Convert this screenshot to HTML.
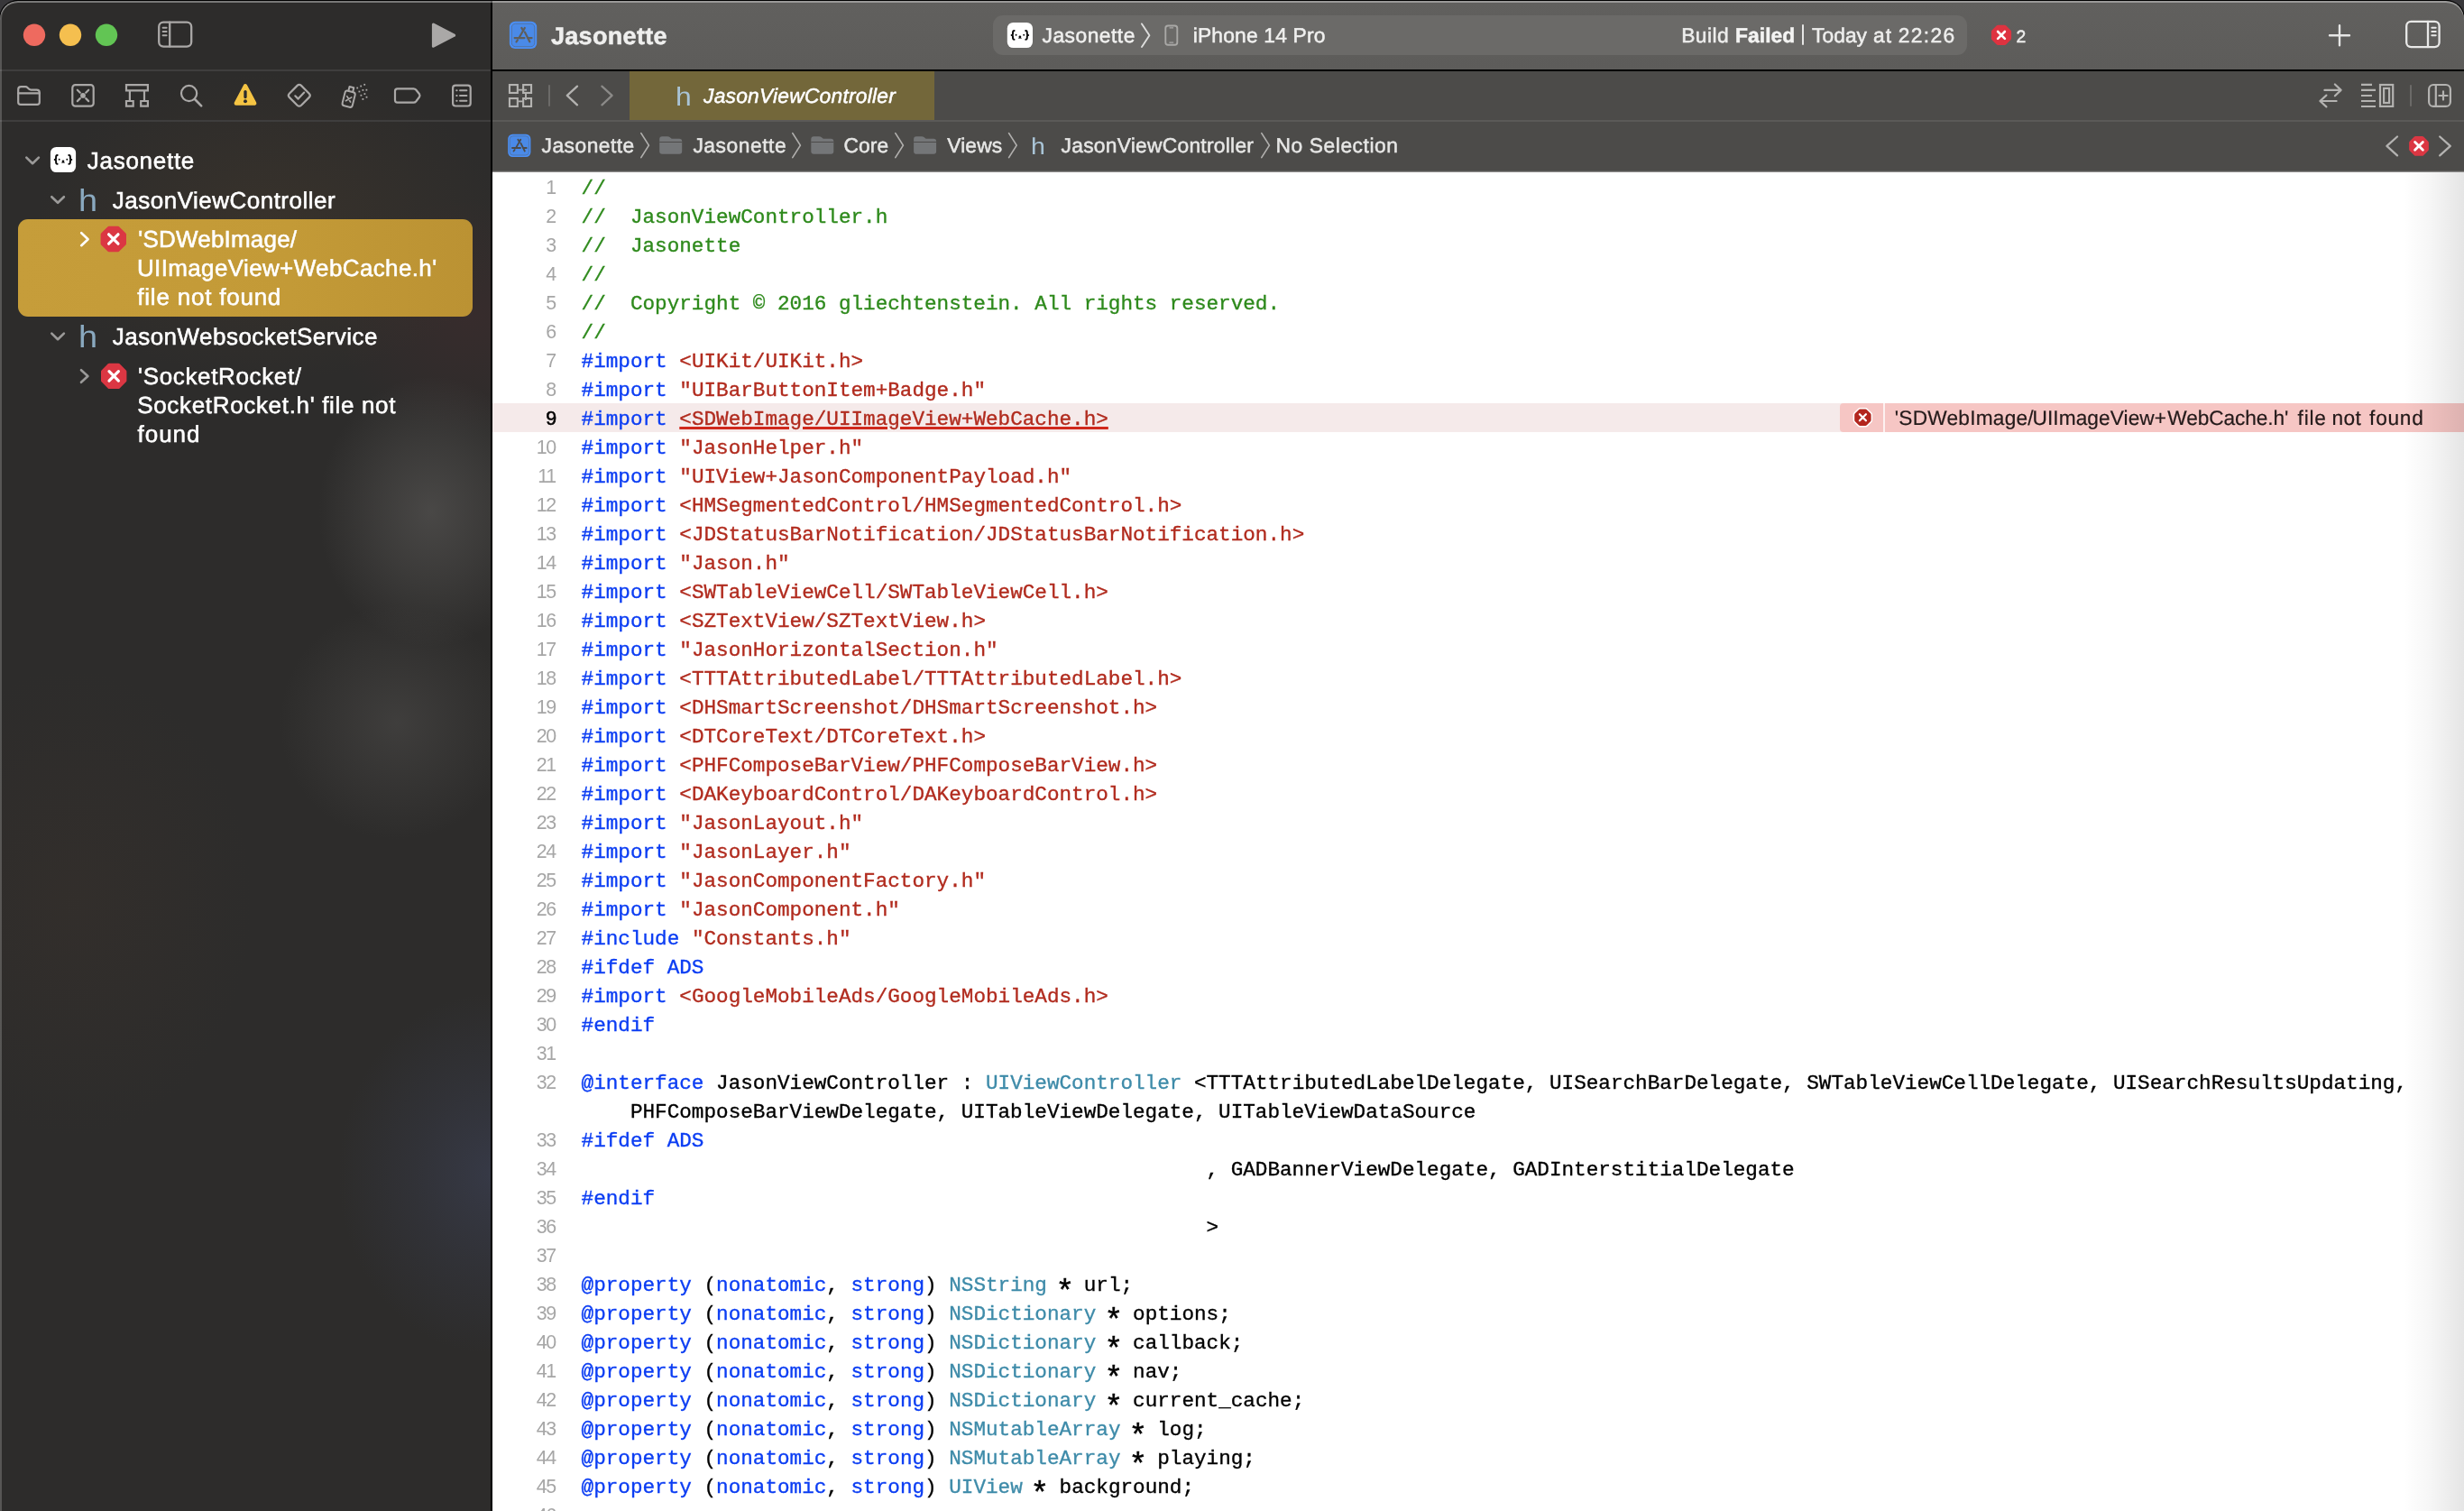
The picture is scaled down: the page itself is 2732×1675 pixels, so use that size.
<!DOCTYPE html><html lang="en"><head><meta charset="utf-8"><title>Jasonette — JasonViewController.h</title><style>
html,body{margin:0;padding:0}
body{width:2732px;height:1675px;position:relative;overflow:hidden;background:#38373a;font-family:'Liberation Sans',sans-serif}
.abs,.t,.win,.win div,.win pre{position:absolute}
.t{white-space:pre;line-height:1;margin:0;text-rendering:geometricPrecision}
.win{will-change:transform;left:0;top:1px;width:2732px;height:1674px;border-radius:20px 20px 0 0;overflow:hidden;background:#2d2c2c;box-shadow:0 0 0 1.2px #000}
#sidebar{left:0;top:0;width:544px;height:1690px;background:
 radial-gradient(ellipse 125px 150px at 478px 566px, rgba(112,110,108,.42), rgba(112,110,108,.22) 50%, rgba(112,110,108,0) 100%),
 radial-gradient(ellipse 130px 130px at 440px 800px, rgba(105,103,101,.30), rgba(105,103,101,.15) 50%, rgba(105,103,101,0) 100%),
 radial-gradient(ellipse 170px 200px at 545px 1300px, rgba(62,68,92,.55), rgba(62,68,92,.25) 50%, rgba(62,68,92,0) 100%),
 radial-gradient(ellipse 260px 170px at 300px 250px, rgba(78,62,44,.34), rgba(78,62,44,.16) 55%, rgba(78,62,44,0) 100%),
 radial-gradient(ellipse 150px 130px at 520px 350px, rgba(70,44,46,.40), rgba(70,44,46,.18) 55%, rgba(70,44,46,0) 100%),
 radial-gradient(ellipse 200px 260px at 80px 1000px, rgba(64,52,44,.28), rgba(64,52,44,0) 100%),
 #2d2c2b}
#vdiv{left:544px;top:0;width:2px;height:1690px;background:#000}
#titlebar{left:546px;top:0;width:2186px;height:76px;background:linear-gradient(#61605e,#5d5c5a)}
#tline{left:546px;top:76px;width:2186px;height:2px;background:#000}
#sline1{left:0;top:76px;width:544px;height:2px;background:#3f3e3e}
#sline2{left:0;top:132px;width:544px;height:2px;background:#3f3e3e}
#tabbar{left:546px;top:78px;width:2186px;height:54px;background:#4c4b49}
#tab{left:698px;top:78px;width:338px;height:54px;background:#73673a}
#tabline{left:546px;top:132px;width:2186px;height:2px;background:#5b5a58}
#crumbs{left:546px;top:134px;width:2186px;height:56px;background:linear-gradient(#4c4b49 54px,#5b5a58 54px,#5b5a58 55px,#8c8b8a 55px)}
#editor{left:546px;top:190px;width:2186px;height:1500px;background:#fff}
#edshadow{left:2119px;top:0;width:67px;height:1500px;background:linear-gradient(90deg,rgba(0,0,0,0),rgba(0,0,0,.03) 40%,rgba(0,0,0,.10))}
#schip{left:1101px;top:16px;width:1080px;height:44px;border-radius:11px;background:#6b6a68}
#hl{left:0;top:256px;width:2186px;height:32px;background:#f5eaea}
#errb{left:1494px;top:256px;width:692px;height:32px;background:#f6c6c4;border-radius:4px 0 0 4px}
#errsep{left:1541.8px;top:256px;width:2.2px;height:32px;background:#fdf1f0}
#sel{left:20px;top:242px;width:504px;height:108px;border-radius:11px;background:linear-gradient(90deg,#c69d3a,#c39a37 60%,#bb9233)}
.ln{right:2116.4px;letter-spacing:-1.45px;font-size:21.4px;color:#a6a6a6;white-space:pre;line-height:32px;height:32px;text-align:right;width:60px;left:auto}
.cl{left:98.6px;font-family:'Liberation Mono',monospace;font-size:22.651px;line-height:32px;height:32px;white-space:pre;color:#000;margin:0;-webkit-text-stroke:.35px currentColor}
.c{color:#2e8a1c}.k{color:#0b3df3}.s{color:#b12b1e}.y{color:#3e8ba9}
.a{display:inline-block;transform:translate(-1px,8.5px) scale(1.52)}
.u{text-decoration:underline;text-decoration-color:#d0281c;text-decoration-thickness:2.8px;text-underline-offset:1.6px}
#wborder{left:0;top:0;width:2732px;height:1690px;border-radius:20px 20px 0 0;box-shadow:inset 0 2px 0 rgba(255,255,255,.36),inset 2px 0 0 rgba(255,255,255,.2)}
svg{position:absolute;left:0;top:0;overflow:visible}
</style></head><body>
<div class="win">
<div id="sidebar"></div><div id="sline1"></div><div id="sline2"></div>
<div id="sel"></div>
<div id="vdiv"></div><div id="titlebar"></div><div id="tline"></div><div id="tabbar"></div><div id="tab"></div><div id="tabline"></div><div id="crumbs"></div>
<div id="schip"></div>
<div id="editor"><div id="hl"></div><div id="errb"></div><div id="errsep"></div>
<div class="ln" style="top:1px">1</div>
<pre class="cl" style="top:2px"><span class="c">//</span></pre>
<div class="ln" style="top:33px">2</div>
<pre class="cl" style="top:34px"><span class="c">//  JasonViewController.h</span></pre>
<div class="ln" style="top:65px">3</div>
<pre class="cl" style="top:66px"><span class="c">//  Jasonette</span></pre>
<div class="ln" style="top:97px">4</div>
<pre class="cl" style="top:98px"><span class="c">//</span></pre>
<div class="ln" style="top:129px">5</div>
<pre class="cl" style="top:130px"><span class="c">//  Copyright © 2016 gliechtenstein. All rights reserved.</span></pre>
<div class="ln" style="top:161px">6</div>
<pre class="cl" style="top:162px"><span class="c">//</span></pre>
<div class="ln" style="top:193px">7</div>
<pre class="cl" style="top:194px"><span class="k">#import </span><span class="s">&lt;UIKit/UIKit.h&gt;</span></pre>
<div class="ln" style="top:225px">8</div>
<pre class="cl" style="top:226px"><span class="k">#import </span><span class="s">"UIBarButtonItem+Badge.h"</span></pre>
<div class="ln" style="top:257px;color:#000;-webkit-text-stroke:.55px #000">9</div>
<pre class="cl" style="top:258px"><span class="k">#import </span><span class="s u">&lt;SDWebImage/UIImageView+WebCache.h&gt;</span></pre>
<div class="ln" style="top:289px">10</div>
<pre class="cl" style="top:290px"><span class="k">#import </span><span class="s">"JasonHelper.h"</span></pre>
<div class="ln" style="top:321px">11</div>
<pre class="cl" style="top:322px"><span class="k">#import </span><span class="s">"UIView+JasonComponentPayload.h"</span></pre>
<div class="ln" style="top:353px">12</div>
<pre class="cl" style="top:354px"><span class="k">#import </span><span class="s">&lt;HMSegmentedControl/HMSegmentedControl.h&gt;</span></pre>
<div class="ln" style="top:385px">13</div>
<pre class="cl" style="top:386px"><span class="k">#import </span><span class="s">&lt;JDStatusBarNotification/JDStatusBarNotification.h&gt;</span></pre>
<div class="ln" style="top:417px">14</div>
<pre class="cl" style="top:418px"><span class="k">#import </span><span class="s">"Jason.h"</span></pre>
<div class="ln" style="top:449px">15</div>
<pre class="cl" style="top:450px"><span class="k">#import </span><span class="s">&lt;SWTableViewCell/SWTableViewCell.h&gt;</span></pre>
<div class="ln" style="top:481px">16</div>
<pre class="cl" style="top:482px"><span class="k">#import </span><span class="s">&lt;SZTextView/SZTextView.h&gt;</span></pre>
<div class="ln" style="top:513px">17</div>
<pre class="cl" style="top:514px"><span class="k">#import </span><span class="s">"JasonHorizontalSection.h"</span></pre>
<div class="ln" style="top:545px">18</div>
<pre class="cl" style="top:546px"><span class="k">#import </span><span class="s">&lt;TTTAttributedLabel/TTTAttributedLabel.h&gt;</span></pre>
<div class="ln" style="top:577px">19</div>
<pre class="cl" style="top:578px"><span class="k">#import </span><span class="s">&lt;DHSmartScreenshot/DHSmartScreenshot.h&gt;</span></pre>
<div class="ln" style="top:609px">20</div>
<pre class="cl" style="top:610px"><span class="k">#import </span><span class="s">&lt;DTCoreText/DTCoreText.h&gt;</span></pre>
<div class="ln" style="top:641px">21</div>
<pre class="cl" style="top:642px"><span class="k">#import </span><span class="s">&lt;PHFComposeBarView/PHFComposeBarView.h&gt;</span></pre>
<div class="ln" style="top:673px">22</div>
<pre class="cl" style="top:674px"><span class="k">#import </span><span class="s">&lt;DAKeyboardControl/DAKeyboardControl.h&gt;</span></pre>
<div class="ln" style="top:705px">23</div>
<pre class="cl" style="top:706px"><span class="k">#import </span><span class="s">"JasonLayout.h"</span></pre>
<div class="ln" style="top:737px">24</div>
<pre class="cl" style="top:738px"><span class="k">#import </span><span class="s">"JasonLayer.h"</span></pre>
<div class="ln" style="top:769px">25</div>
<pre class="cl" style="top:770px"><span class="k">#import </span><span class="s">"JasonComponentFactory.h"</span></pre>
<div class="ln" style="top:801px">26</div>
<pre class="cl" style="top:802px"><span class="k">#import </span><span class="s">"JasonComponent.h"</span></pre>
<div class="ln" style="top:833px">27</div>
<pre class="cl" style="top:834px"><span class="k">#include </span><span class="s">"Constants.h"</span></pre>
<div class="ln" style="top:865px">28</div>
<pre class="cl" style="top:866px"><span class="k">#ifdef ADS</span></pre>
<div class="ln" style="top:897px">29</div>
<pre class="cl" style="top:898px"><span class="k">#import </span><span class="s">&lt;GoogleMobileAds/GoogleMobileAds.h&gt;</span></pre>
<div class="ln" style="top:929px">30</div>
<pre class="cl" style="top:930px"><span class="k">#endif</span></pre>
<div class="ln" style="top:961px">31</div>
<div class="ln" style="top:993px">32</div>
<pre class="cl" style="top:994px"><span class="k">@interface</span> JasonViewController : <span class="y">UIViewController</span> &lt;TTTAttributedLabelDelegate, UISearchBarDelegate, SWTableViewCellDelegate, UISearchResultsUpdating,</pre>
<pre class="cl" style="top:1026px">    PHFComposeBarViewDelegate, UITableViewDelegate, UITableViewDataSource</pre>
<div class="ln" style="top:1057px">33</div>
<pre class="cl" style="top:1058px"><span class="k">#ifdef ADS</span></pre>
<div class="ln" style="top:1089px">34</div>
<pre class="cl" style="top:1090px">                                                   , GADBannerViewDelegate, GADInterstitialDelegate</pre>
<div class="ln" style="top:1121px">35</div>
<pre class="cl" style="top:1122px"><span class="k">#endif</span></pre>
<div class="ln" style="top:1153px">36</div>
<pre class="cl" style="top:1154px">                                                   &gt;</pre>
<div class="ln" style="top:1185px">37</div>
<div class="ln" style="top:1217px">38</div>
<pre class="cl" style="top:1218px"><span class="k">@property</span> (<span class="k">nonatomic</span>, <span class="k">strong</span>) <span class="y">NSString</span> <span class="a">*</span> url;</pre>
<div class="ln" style="top:1249px">39</div>
<pre class="cl" style="top:1250px"><span class="k">@property</span> (<span class="k">nonatomic</span>, <span class="k">strong</span>) <span class="y">NSDictionary</span> <span class="a">*</span> options;</pre>
<div class="ln" style="top:1281px">40</div>
<pre class="cl" style="top:1282px"><span class="k">@property</span> (<span class="k">nonatomic</span>, <span class="k">strong</span>) <span class="y">NSDictionary</span> <span class="a">*</span> callback;</pre>
<div class="ln" style="top:1313px">41</div>
<pre class="cl" style="top:1314px"><span class="k">@property</span> (<span class="k">nonatomic</span>, <span class="k">strong</span>) <span class="y">NSDictionary</span> <span class="a">*</span> nav;</pre>
<div class="ln" style="top:1345px">42</div>
<pre class="cl" style="top:1346px"><span class="k">@property</span> (<span class="k">nonatomic</span>, <span class="k">strong</span>) <span class="y">NSDictionary</span> <span class="a">*</span> current_cache;</pre>
<div class="ln" style="top:1377px">43</div>
<pre class="cl" style="top:1378px"><span class="k">@property</span> (<span class="k">nonatomic</span>, <span class="k">strong</span>) <span class="y">NSMutableArray</span> <span class="a">*</span> log;</pre>
<div class="ln" style="top:1409px">44</div>
<pre class="cl" style="top:1410px"><span class="k">@property</span> (<span class="k">nonatomic</span>, <span class="k">strong</span>) <span class="y">NSMutableArray</span> <span class="a">*</span> playing;</pre>
<div class="ln" style="top:1441px">45</div>
<pre class="cl" style="top:1442px"><span class="k">@property</span> (<span class="k">nonatomic</span>, <span class="k">strong</span>) <span class="y">UIView</span> <span class="a">*</span> background;</pre>
<div class="ln" style="top:1473px">46</div>
<div id="edshadow"></div>
</div>
<svg width="2732" height="1690" viewBox="0 0 2732 1690"><g transform="translate(0,-1)">
<circle cx="38" cy="38.8" r="12.2" fill="#ee6a5f"/>
<circle cx="78" cy="38.8" r="12.2" fill="#f5bf4f"/>
<circle cx="118" cy="38.8" r="12.2" fill="#62c554"/>
<g fill="none" stroke="#aaa8a7" stroke-width="2.3" stroke-linecap="round"><rect x="176.2" y="24.7" width="36" height="26.9" rx="5"/><path d="M188.2 24.7V51.6"/><path d="M180.6 30.7H184.6M180.6 35H184.6M180.6 39.3H184.6" stroke-width="2"/></g>
<path d="M480.5 27.2 L503.6 39.2 L480.5 51.2 Z" fill="#aaa8a7" stroke="#aaa8a7" stroke-width="3.2" stroke-linejoin="round"/>
<g fill="none" stroke="#aaa8a7" stroke-width="2.2" stroke-linejoin="round" stroke-linecap="round">
<path d="M20.2 113.2V99.3Q20.2 96.2 23.3 96.2H28.2Q29.6 96.2 30.6 97.2L32.2 98.8Q33 99.6 34.4 99.6H40.7Q43.8 99.6 43.8 102.7V113.2Q43.8 115.9 41.1 115.9H22.9Q20.2 115.9 20.2 113.2Z"/><path d="M20.2 103.4H43.8"/>
<rect x="80.3" y="94.2" width="23.4" height="23.4" rx="3.2"/><path d="M85.8 99.7L88.8 102.7M98.2 99.7L95.2 102.7M85.8 112.1L88.8 109.1M98.2 112.1L95.2 109.1"/><circle cx="92" cy="105.9" r="2.9" fill="#aaa8a7" stroke="none"/>
<path d="M140 94.2H163.9V100.4H140ZM140 112H147.7V117.6H140ZM156.2 112H163.9V117.6H156.2ZM143.9 100.4V112M160 100.4V112" stroke-linejoin="miter" stroke-linecap="butt"/>
<circle cx="209.6" cy="103.5" r="8.6"/><path d="M216 110L223.2 117.3" stroke-width="2.6"/>
<path d="M331.8 93.9Q333 93.9 334 94.9L342.8 103.7Q344.8 105.8 342.8 107.9L334 116.7Q331.8 118.7 329.6 116.7L320.8 107.9Q318.8 105.8 320.8 103.7L329.6 94.9Q330.6 93.9 331.8 93.9Z"/><path d="M327.3 106.3L330.6 109.6L337.2 102.6"/>
<g transform="translate(-2.6,0.2) translate(389 107.5) scale(.91) translate(-389 -107.5) rotate(14 392 110)"><rect x="383" y="101" width="12.6" height="18.8" rx="3"/><path d="M386.6 101V95.6H392V101"/><path d="M386.4 107.6L392.2 113.4M392.2 107.6L386.4 113.4" stroke-width="1.8"/></g>
<g fill="#aaa8a7" stroke="none"><rect x="395.3" y="96.6" width="1.8" height="1.8"/><rect x="399.3" y="94.6" width="1.8" height="1.8"/><rect x="403.3" y="92.9" width="1.8" height="1.8"/><rect x="397.5" y="100.6" width="1.8" height="1.8"/><rect x="401.5" y="99.0" width="1.8" height="1.8"/><rect x="405.5" y="98.8" width="1.8" height="1.8"/><rect x="399.5" y="104.8" width="1.8" height="1.8"/><rect x="403.5" y="103.2" width="1.8" height="1.8"/><rect x="401.5" y="109.0" width="1.8" height="1.8"/><rect x="405.6" y="106.8" width="1.8" height="1.8"/></g>
<path d="M440.6 98.3H458.6Q460.2 98.3 461.2 99.5L465 104.3Q466 105.9 465 107.5L461.2 112.5Q460.2 113.7 458.6 113.7H440.6Q438 113.7 438 111.1V100.9Q438 98.3 440.6 98.3Z"/>
<rect x="502.1" y="94.6" width="19.6" height="22.9" rx="3"/><path d="M510 100.3H517.4M510 106H517.4M510 111.8H517.4M506.2 100.3H506.6M506.2 106H506.6M506.2 111.8H506.6" stroke-width="2"/>
</g>
<path d="M272 95.2L282.2 114.5H261.8Z" fill="#f5c443" stroke="#f5c443" stroke-width="4.4" stroke-linejoin="round"/><path d="M272 101.6V107.6" stroke="#2d2c2c" stroke-width="3.3" stroke-linecap="round"/><circle cx="272" cy="112.2" r="1.95" fill="#2d2c2c"/>
<path d="M29.30 174.60 L36.10 181.20 L42.90 174.60" fill="none" stroke="#9b9a99" stroke-width="2.6" stroke-linecap="round" stroke-linejoin="round"/>
<path d="M57.30 218.20 L64.10 224.80 L70.90 218.20" fill="none" stroke="#9b9a99" stroke-width="2.6" stroke-linecap="round" stroke-linejoin="round"/>
<path d="M57.30 369.60 L64.10 376.20 L70.90 369.60" fill="none" stroke="#9b9a99" stroke-width="2.6" stroke-linecap="round" stroke-linejoin="round"/>
<path d="M90.20 258.20 L97.60 265.20 L90.20 272.20" fill="none" stroke="#fff" stroke-width="2.6" stroke-linecap="round" stroke-linejoin="round"/>
<path d="M90.00 410.20 L97.40 417.00 L90.00 423.80" fill="none" stroke="#9b9a99" stroke-width="2.6" stroke-linecap="round" stroke-linejoin="round"/>
<rect x="55.90" y="162.90" width="28.20" height="28.20" rx="6.60" fill="#fff"/><path d="M63.70 172.05 Q62.10 172.05 62.10 174.05 L62.10 175.35 Q62.10 176.95 60.70 176.95 Q62.10 176.95 62.10 178.55 L62.10 179.85 Q62.10 181.85 63.70 181.85 M76.30 172.05 Q77.90 172.05 77.90 174.05 L77.90 175.35 Q77.90 176.95 79.30 176.95 Q77.90 176.95 77.90 178.55 L77.90 179.85 Q77.90 181.85 76.30 181.85" fill="none" stroke="#0a0a0a" stroke-width="1.95" stroke-linecap="round" stroke-linejoin="round"/><circle cx="65.70" cy="176.75" r="0.95" fill="#0a0a0a"/><circle cx="74.30" cy="176.75" r="0.95" fill="#0a0a0a"/><circle cx="70.00" cy="178.85" r="1.35" fill="#0a0a0a"/><path d="M67.80 180.75 L72.20 180.75 L70.00 178.15 Z" fill="#0a0a0a" opacity=".8"/>
<path d="M120.75 252.80 L130.85 252.80 L138.00 259.95 L138.00 270.05 L130.85 277.20 L120.75 277.20 L113.60 270.05 L113.60 259.95Z" fill="#db3743" stroke="#db3743" stroke-width="4" stroke-linejoin="round"/><path d="M120.60 259.80 L131.00 270.20 M131.00 259.80 L120.60 270.20" stroke="#fff" stroke-width="3.2" stroke-linecap="round" fill="none"/>
<path d="M121.15 404.70 L131.25 404.70 L138.40 411.85 L138.40 421.95 L131.25 429.10 L121.15 429.10 L114.00 421.95 L114.00 411.85Z" fill="#db3743" stroke="#db3743" stroke-width="4" stroke-linejoin="round"/><path d="M121.00 411.70 L131.40 422.10 M131.40 411.70 L121.00 422.10" stroke="#fff" stroke-width="3.2" stroke-linecap="round" fill="none"/>
<rect x="564.90" y="23.80" width="30.30" height="30.30" rx="6.20" fill="#4a8ff6"/><rect x="567.30" y="26.20" width="25.50" height="25.50" rx="4.20" fill="#4a8ae8" stroke="#52709c" stroke-width="0.90"/><path d="M578.30 30.90 L580.00 33.80 M581.80 31.00 L575.90 41.30 M581.90 35.60 L587.30 46.30 M570.60 42.10 L581.50 42.10 M584.90 42.10 L589.60 42.10 M572.50 46.30 L573.90 44.40 " stroke="#5f5e5c" stroke-width="2.20" stroke-linecap="round" fill="none"/>
<rect x="1116.80" y="24.90" width="28.20" height="28.20" rx="6.60" fill="#fff"/><path d="M1124.60 34.05 Q1123.00 34.05 1123.00 36.05 L1123.00 37.35 Q1123.00 38.95 1121.60 38.95 Q1123.00 38.95 1123.00 40.55 L1123.00 41.85 Q1123.00 43.85 1124.60 43.85 M1137.20 34.05 Q1138.80 34.05 1138.80 36.05 L1138.80 37.35 Q1138.80 38.95 1140.20 38.95 Q1138.80 38.95 1138.80 40.55 L1138.80 41.85 Q1138.80 43.85 1137.20 43.85" fill="none" stroke="#0a0a0a" stroke-width="1.95" stroke-linecap="round" stroke-linejoin="round"/><circle cx="1126.60" cy="38.75" r="0.95" fill="#0a0a0a"/><circle cx="1135.20" cy="38.75" r="0.95" fill="#0a0a0a"/><circle cx="1130.90" cy="40.85" r="1.35" fill="#0a0a0a"/><path d="M1128.70 42.75 L1133.10 42.75 L1130.90 40.15 Z" fill="#0a0a0a" opacity=".8"/>
<path d="M1266.00 26.40 L1274.40 39.20 L1266.00 52.00" fill="none" stroke="#dddddc" stroke-width="1.9" stroke-linecap="round" stroke-linejoin="round"/>
<g fill="none" stroke="#a9a8a6" stroke-width="1.9"><rect x="1292.3" y="28.5" width="13" height="21.2" rx="2.8"/><path d="M1296.6 30.9H1301M1296.4 47.2H1301.2" stroke-width="1.3"/></g>
<path d="M2215.48 30.40 L2222.52 30.40 L2227.50 35.38 L2227.50 42.42 L2222.52 47.40 L2215.48 47.40 L2210.50 42.42 L2210.50 35.38Z" fill="#de3340" stroke="#de3340" stroke-width="5.2" stroke-linejoin="round"/><path d="M2215.10 35.00 L2222.90 42.80 M2222.90 35.00 L2215.10 42.80" stroke="#fff" stroke-width="2.6" stroke-linecap="round" fill="none"/>
<path d="M2583 39.2H2605M2594 28.2V50.2" stroke="#e6e6e5" stroke-width="2.4" stroke-linecap="round"/>
<g fill="none" stroke="#e9e9e8" stroke-width="2.3" stroke-linecap="round"><rect x="2668.2" y="23.9" width="36.4" height="28.2" rx="5"/><path d="M2692 23.9V52.1"/><path d="M2696.3 30.7H2700.7M2696.3 35H2700.7M2696.3 39.3H2700.7" stroke-width="2"/></g>
<g fill="none" stroke="#b4b3b1" stroke-width="2.1">
<rect x="564.95" y="94.05" width="8.9" height="8.9"/><rect x="580.15" y="94.05" width="8.9" height="8.9"/><rect x="564.95" y="109.05" width="8.9" height="8.9"/><rect x="580.15" y="109.05" width="8.9" height="8.9"/>
<path d="M574.9 99.6H584M583 104V111M574.9 112.4H580" stroke-width="1.9"/></g>
<rect x="608" y="94.2" width="2" height="23.6" fill="#6b6a68"/>
<path d="M640.00 95.60 L628.80 105.90 L640.00 116.30" fill="none" stroke="#b4b3b1" stroke-width="2.3" stroke-linecap="round" stroke-linejoin="round"/>
<path d="M667.40 95.60 L678.60 105.90 L667.40 116.30" fill="none" stroke="#8b8a88" stroke-width="2.3" stroke-linecap="round" stroke-linejoin="round"/>
<g fill="none" stroke="#b4b3b1" stroke-width="2.2" stroke-linecap="round" stroke-linejoin="round">
<path d="M2577.4 99.9H2595.6M2588.9 93.5L2595.6 99.9L2588.9 106.3M2590.6 112H2572.4M2579.4 105.6L2572.4 112L2579.4 118.4"/>
<path d="M2618 93.9H2630M2618 99.9H2634M2618 106H2630M2618 112H2634M2618 118H2634" stroke-linecap="butt"/>
<rect x="2639" y="94" width="14.2" height="23.9" stroke-linejoin="miter"/><rect x="2643.1" y="97.9" width="6" height="16.1" stroke-linejoin="miter"/>
<rect x="2693.1" y="94" width="23.8" height="23.9" rx="5"/><path d="M2700.8 94V117.9M2704.4 106H2713.6M2709 101.4V110.6"/>
</g>
<rect x="2672" y="94.2" width="2" height="23.6" fill="#6b6a68"/>
<rect x="563.20" y="148.80" width="25.20" height="25.20" rx="5.16" fill="#4a8ff6"/><rect x="565.20" y="150.80" width="21.21" height="21.21" rx="3.49" fill="#4a8ae8" stroke="#52709c" stroke-width="0.75"/><path d="M574.34 154.70 L575.76 157.12 M577.26 154.79 L572.35 163.35 M577.34 158.61 L581.83 167.51 M567.94 164.02 L577.01 164.02 M579.83 164.02 L583.74 164.02 M569.52 167.51 L570.69 165.93 " stroke="#4c4b49" stroke-width="1.83" stroke-linecap="round" fill="none"/>
<path d="M710.80 147.60 L719.40 161.10 L710.80 174.60" fill="none" stroke="#b0afad" stroke-width="1.7" stroke-linecap="round" stroke-linejoin="round"/>
<path d="M878.80 147.60 L887.40 161.10 L878.80 174.60" fill="none" stroke="#b0afad" stroke-width="1.7" stroke-linecap="round" stroke-linejoin="round"/>
<path d="M992.80 147.60 L1001.40 161.10 L992.80 174.60" fill="none" stroke="#b0afad" stroke-width="1.7" stroke-linecap="round" stroke-linejoin="round"/>
<path d="M1118.60 147.60 L1127.20 161.10 L1118.60 174.60" fill="none" stroke="#b0afad" stroke-width="1.7" stroke-linecap="round" stroke-linejoin="round"/>
<path d="M1398.80 147.60 L1407.40 161.10 L1398.80 174.60" fill="none" stroke="#b0afad" stroke-width="1.7" stroke-linecap="round" stroke-linejoin="round"/>
<path d="M731.20 154.20 Q731.20 151.20 734.20 151.20 L739.70 151.20 Q741.70 151.20 743.20 152.60 L744.70 153.80 L753.20 153.80 Q756.20 153.80 756.20 156.80 L756.20 167.80 Q756.20 170.80 753.20 170.80 L734.20 170.80 Q731.20 170.80 731.20 167.80 Z" fill="#747678"/><path d="M731.20 157.50 L756.20 157.50" stroke="#4c4b49" stroke-width="1.1"/>
<path d="M899.30 154.20 Q899.30 151.20 902.30 151.20 L907.80 151.20 Q909.80 151.20 911.30 152.60 L912.80 153.80 L921.30 153.80 Q924.30 153.80 924.30 156.80 L924.30 167.80 Q924.30 170.80 921.30 170.80 L902.30 170.80 Q899.30 170.80 899.30 167.80 Z" fill="#747678"/><path d="M899.30 157.50 L924.30 157.50" stroke="#4c4b49" stroke-width="1.1"/>
<path d="M1013.10 154.20 Q1013.10 151.20 1016.10 151.20 L1021.60 151.20 Q1023.60 151.20 1025.10 152.60 L1026.60 153.80 L1035.10 153.80 Q1038.10 153.80 1038.10 156.80 L1038.10 167.80 Q1038.10 170.80 1035.10 170.80 L1016.10 170.80 Q1013.10 170.80 1013.10 167.80 Z" fill="#747678"/><path d="M1013.10 157.50 L1038.10 157.50" stroke="#4c4b49" stroke-width="1.1"/>
<path d="M2658.00 151.50 L2646.40 161.90 L2658.00 172.40" fill="none" stroke="#b4b3b1" stroke-width="2.3" stroke-linecap="round" stroke-linejoin="round"/>
<path d="M2705.20 151.50 L2716.80 161.90 L2705.20 172.40" fill="none" stroke="#b4b3b1" stroke-width="2.3" stroke-linecap="round" stroke-linejoin="round"/>
<path d="M2678.31 153.00 L2685.69 153.00 L2690.90 158.21 L2690.90 165.59 L2685.69 170.80 L2678.31 170.80 L2673.10 165.59 L2673.10 158.21Z" fill="#db3743" stroke="#db3743" stroke-width="4" stroke-linejoin="round"/><path d="M2677.60 157.50 L2686.40 166.30 M2686.40 157.50 L2677.60 166.30" stroke="#fff" stroke-width="2.8" stroke-linecap="round" fill="none"/>
<path d="M2062.09 454.80 L2068.71 454.80 L2073.40 459.49 L2073.40 466.11 L2068.71 470.80 L2062.09 470.80 L2057.40 466.11 L2057.40 459.49Z" fill="#fff" stroke="#fff" stroke-width="5.4" stroke-linejoin="round"/><path d="M2065.40 462.80 L2065.40 462.80 M2065.40 462.80 L2065.40 462.80" stroke="#fff" stroke-width="0" stroke-linecap="round" fill="none"/>
<path d="M2062.50 455.80 L2068.30 455.80 L2072.40 459.90 L2072.40 465.70 L2068.30 469.80 L2062.50 469.80 L2058.40 465.70 L2058.40 459.90Z" fill="#b3261e" stroke="#b3261e" stroke-width="4.4" stroke-linejoin="round"/><path d="M2061.90 459.30 L2068.90 466.30 M2068.90 459.30 L2061.90 466.30" stroke="#fff" stroke-width="2.3" stroke-linecap="round" fill="none"/>
</g></svg>
<div class="t " style="left:96.8px;top:164px;font-size:26px;color:#fff;letter-spacing:0.72px;-webkit-text-stroke:.55px currentColor;">Jasonette</div>
<div class="t " style="left:86.7px;top:205px;font-size:34.5px;color:#8aa9bf;transform:scaleX(1.1);transform-origin:0 0;">h</div>
<div class="t " style="left:124.8px;top:208px;font-size:26px;color:#fff;letter-spacing:0.49px;-webkit-text-stroke:.55px currentColor;">JasonViewController</div>
<div class="t " style="left:153.3px;top:251px;font-size:26px;color:#fff;letter-spacing:0.20px;-webkit-text-stroke:.55px currentColor;">'SDWebImage/</div>
<div class="t " style="left:151.9px;top:283px;font-size:26px;color:#fff;letter-spacing:0.37px;-webkit-text-stroke:.55px currentColor;">UIImageView+WebCache.h'</div>
<div class="t " style="left:152.3px;top:315px;font-size:26px;color:#fff;letter-spacing:0.78px;-webkit-text-stroke:.55px currentColor;">file not found</div>
<div class="t " style="left:86.7px;top:356px;font-size:34.5px;color:#8aa9bf;transform:scaleX(1.1);transform-origin:0 0;">h</div>
<div class="t " style="left:124.8px;top:359px;font-size:26px;color:#fff;letter-spacing:0.47px;-webkit-text-stroke:.55px currentColor;">JasonWebsocketService</div>
<div class="t " style="left:153.1px;top:403px;font-size:26px;color:#fff;letter-spacing:0.64px;-webkit-text-stroke:.55px currentColor;">'SocketRocket/</div>
<div class="t " style="left:152.2px;top:435px;font-size:26px;color:#fff;letter-spacing:0.67px;-webkit-text-stroke:.55px currentColor;">SocketRocket.h' file not</div>
<div class="t " style="left:152.5px;top:467px;font-size:26px;color:#fff;letter-spacing:0.98px;-webkit-text-stroke:.55px currentColor;">found</div>
<div class="t " style="left:610.9px;top:26px;font-size:27px;color:#efefee;font-weight:700;letter-spacing:0.33px;-webkit-text-stroke:.5px currentColor;">Jasonette</div>
<div class="t " style="left:1155.5px;top:27px;font-size:22.8px;color:#f0f0ef;letter-spacing:0.50px;-webkit-text-stroke:.5px currentColor;">Jasonette</div>
<div class="t " style="left:1322.7px;top:27px;font-size:22.8px;color:#f0f0ef;letter-spacing:0.19px;-webkit-text-stroke:.5px currentColor;">iPhone 14 Pro</div>
<div class="t " style="left:1864.2px;top:27px;font-size:22.8px;color:#eeeeed;letter-spacing:0.45px;-webkit-text-stroke:.5px currentColor;">Build</div>
<div class="t " style="left:1924.0px;top:27px;font-size:22.8px;color:#f4f4f3;font-weight:700;letter-spacing:0.08px;-webkit-text-stroke:.5px currentColor;">Failed</div>
<div style="left:1998px;top:26.4px;width:2.4px;height:22.7px;background:#e6e6e5;border-radius:1px"></div>
<div class="t " style="left:2009.1px;top:27px;font-size:22.8px;color:#eeeeed;letter-spacing:0.02px;-webkit-text-stroke:.5px currentColor;">Today</div>
<div class="t " style="left:2076.9px;top:27px;font-size:22.8px;color:#eeeeed;letter-spacing:1.30px;-webkit-text-stroke:.5px currentColor;">at</div>
<div class="t " style="left:2104.7px;top:27px;font-size:22.8px;color:#eeeeed;letter-spacing:1.38px;-webkit-text-stroke:.5px currentColor;">22:26</div>
<div class="t " style="left:2235.6px;top:31px;font-size:19.3px;color:#eeeeed;-webkit-text-stroke:.5px currentColor;">2</div>
<div class="t " style="left:748.7px;top:93px;font-size:29px;color:#a9c4d6;transform:scaleX(1.1);transform-origin:0 0;">h</div>
<div class="t " style="left:780.0px;top:94px;font-size:22.8px;color:#fff;font-style:italic;letter-spacing:0.23px;-webkit-text-stroke:.5px currentColor;">JasonViewController</div>
<div class="t " style="left:600.6px;top:149px;font-size:22.8px;color:#e6e6e5;letter-spacing:0.47px;-webkit-text-stroke:.5px currentColor;">Jasonette</div>
<div class="t " style="left:768.4px;top:149px;font-size:22.8px;color:#e6e6e5;letter-spacing:0.54px;-webkit-text-stroke:.5px currentColor;">Jasonette</div>
<div class="t " style="left:935.4px;top:149px;font-size:22.8px;color:#e6e6e5;letter-spacing:0.13px;-webkit-text-stroke:.5px currentColor;">Core</div>
<div class="t " style="left:1050.2px;top:149px;font-size:22.8px;color:#e6e6e5;letter-spacing:0.15px;-webkit-text-stroke:.5px currentColor;">Views</div>
<div class="t " style="left:1142.8px;top:148px;font-size:26px;color:#a9c4d6;transform:scaleX(1.1);transform-origin:0 0;">h</div>
<div class="t " style="left:1176.6px;top:149px;font-size:22.8px;color:#e6e6e5;letter-spacing:0.26px;-webkit-text-stroke:.5px currentColor;">JasonViewController</div>
<div class="t " style="left:1414.6px;top:149px;font-size:22.8px;color:#e6e6e5;letter-spacing:0.56px;-webkit-text-stroke:.5px currentColor;">No Selection</div>
<div class="t " style="left:2100.8px;top:451px;font-size:22.7px;color:#241a1a;letter-spacing:0.22px;-webkit-text-stroke:.2px currentColor;">'SDWebImage/</div>
<div class="t " style="left:2253.5px;top:451px;font-size:22.7px;color:#241a1a;letter-spacing:0.07px;-webkit-text-stroke:.2px currentColor;">UIImageView+</div>
<div class="t " style="left:2403.3px;top:451px;font-size:22.7px;color:#241a1a;letter-spacing:-0.11px;-webkit-text-stroke:.2px currentColor;">WebCache.h'</div>
<div class="t " style="left:2547.6px;top:451px;font-size:22.7px;color:#241a1a;letter-spacing:0.77px;-webkit-text-stroke:.2px currentColor;">file</div>
<div class="t " style="left:2585.5px;top:451px;font-size:22.7px;color:#241a1a;letter-spacing:0.35px;-webkit-text-stroke:.2px currentColor;">not</div>
<div class="t " style="left:2627.1px;top:451px;font-size:22.7px;color:#241a1a;letter-spacing:0.73px;-webkit-text-stroke:.2px currentColor;">found</div>
<div id="wborder"></div></div></body></html>
